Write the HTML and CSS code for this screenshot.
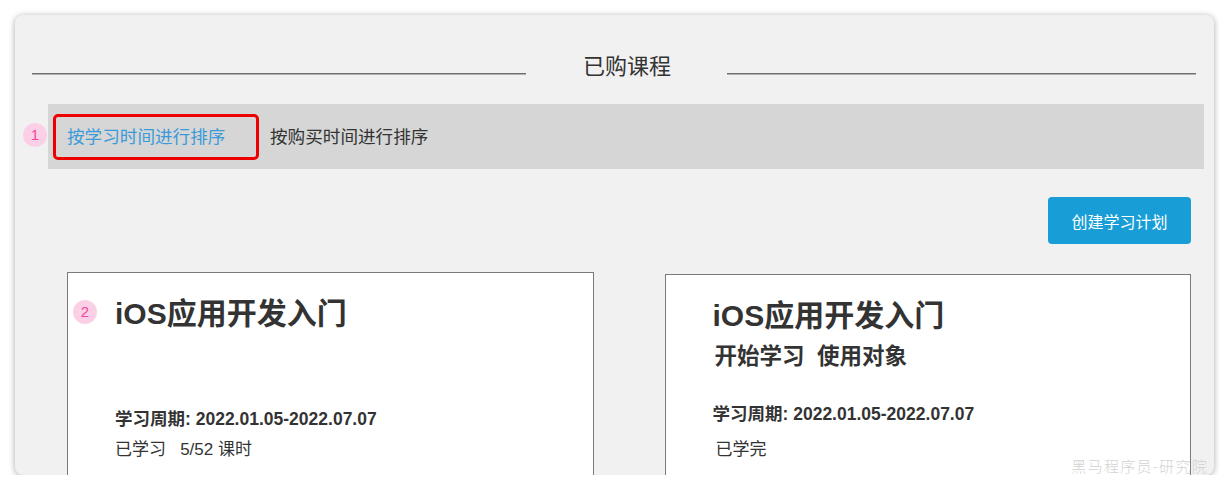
FILE: index.html
```html
<!DOCTYPE html>
<html lang="zh-CN">
<head>
<meta charset="utf-8">
<title>已购课程</title>
<link rel="stylesheet" href="styles.css">
</head>
<body>
<div class="panel">
  <div class="header">
    <span class="rule rule--left"></span>
    <h2 class="header-title">已购课程</h2>
    <span class="rule rule--right"></span>
  </div>

  <div class="sortbar">
    <span class="badge badge--sort">1</span>
    <div class="tab tab--active tab--marked">按学习时间进行排序</div>
    <div class="tab">按购买时间进行排序</div>
  </div>

  <div class="actions">
    <button class="btn-primary">创建学习计划</button>
  </div>

  <div class="cards">
    <div class="card card--plain">
      <span class="badge badge--card">2</span>
      <h3 class="card-title">iOS应用开发入门</h3>
      <div class="card-sub"></div>
      <div class="card-date">学习周期: 2022.01.05-2022.07.07</div>
      <div class="card-status">已学习&nbsp;&nbsp;&nbsp;5/52 课时</div>
    </div>
    <div class="card card--done">
      <h3 class="card-title">iOS应用开发入门</h3>
      <div class="card-sub">开始学习&nbsp;&nbsp;使用对象</div>
      <div class="card-date">学习周期: 2022.01.05-2022.07.07</div>
      <div class="card-status">已学完</div>
    </div>
  </div>

  <div class="watermark">黑马程序员-研究院</div>
</div>
</body>
</html>
```

FILE: styles.css
```css
* { box-sizing: border-box; }

html, body {
  margin: 0;
  padding: 0;
  background: #ffffff;
}

body {
  font-family: "Liberation Sans", "Noto Sans CJK SC", sans-serif;
  color: #333333;
  padding: 15px 15px 0 15px;
}

.panel {
  position: relative;
  width: 1199px;
  height: 460px;
  background: #f1f1f1;
  border-radius: 8px;
  box-shadow: 0 1px 6px rgba(0, 0, 0, 0.35);
  overflow: hidden;
}

/* header */
.header {
  display: flex;
  align-items: flex-start;
  padding: 37px 18px 0 17px;
  height: 67px;
}

.rule {
  display: block;
  margin-top: 21px;
  height: 2px;
  border-top: 1px solid #6e6e6e;
  border-bottom: 1px solid #b0b0b0;
}

.rule--left { flex: 0 0 494px; }
.rule--right { flex: 1 1 auto; }

.header-title {
  margin: 0 56px 0 57px;
  font-size: 22px;
  font-weight: normal;
  line-height: 30px;
  color: #333;
  white-space: nowrap;
}

/* sort bar */
.sortbar {
  position: relative;
  display: flex;
  align-items: center;
  margin: 22px 10px 0 33px;
  height: 65px;
  padding-left: 5px;
  background: #d6d6d6;
}

.tab {
  font-size: 17.6px;
  line-height: 24px;
  color: #333;
  white-space: nowrap;
}

.tab--active {
  color: #3b9ad8;
}

.tab--marked {
  width: 206px;
  height: 46px;
  padding-left: 11px;
  display: flex;
  align-items: center;
  border: 3px solid #ee0000;
  border-radius: 5px;
  margin-right: 11px;
}

.badge {
  position: absolute;
  width: 24px;
  height: 24px;
  border-radius: 50%;
  background: #fbd0e6;
  color: #f0479f;
  font-size: 15px;
  line-height: 24px;
  text-align: center;
}

.badge--sort {
  left: -25px;
  top: 19px;
}

.badge--card {
  left: 5px;
  top: 27px;
}

/* actions */
.actions {
  display: flex;
  justify-content: flex-end;
  padding-right: 23px;
  margin-top: 28px;
}

.btn-primary {
  width: 143px;
  height: 47px;
  border: none;
  border-radius: 4px;
  background: #189dd6;
  color: #ffffff;
  font-family: "Liberation Sans", "Noto Sans CJK SC", sans-serif;
  font-size: 16px;
  padding: 0;
}

/* cards */
.cards {
  display: flex;
  align-items: flex-start;
  gap: 71px;
  padding: 0 23px 0 52px;
  margin-top: 28px;
}

.card {
  position: relative;
  flex: 1 1 0;
  height: 260px;
  background: #ffffff;
  border: 1px solid #7a7a7a;
  padding: 21px 20px 0 47px;
}

.card--done {
  margin-top: 2px;
}

.card-title {
  margin: 0;
  font-size: 30px;
  font-weight: bold;
  line-height: 40px;
  color: #333;
  white-space: nowrap;
}

.card-sub {
  margin-top: 5px;
  height: 32px;
  padding-left: 2px;
  font-size: 22.5px;
  font-weight: bold;
  line-height: 32px;
  color: #333;
  white-space: nowrap;
}

.card-date {
  margin-top: 28px;
  font-size: 17.5px;
  font-weight: bold;
  line-height: 26px;
  white-space: nowrap;
}

.card-status {
  margin-top: 8px;
  font-size: 17px;
  line-height: 26px;
  white-space: nowrap;
}

.card--plain .card-date { margin-top: 35px; }
.card--plain .card-status { margin-top: 5px; }
.card--done .card-status { padding-left: 3px; margin-top: 10px; }

/* watermark */
.watermark {
  position: absolute;
  right: 6px;
  bottom: 0;
  font-family: "Noto Sans CJK SC", sans-serif;
  font-weight: 300;
  font-size: 15px;
  line-height: 18px;
  letter-spacing: 1.3px;
  color: #d2d2d2;
  white-space: nowrap;
}
```
